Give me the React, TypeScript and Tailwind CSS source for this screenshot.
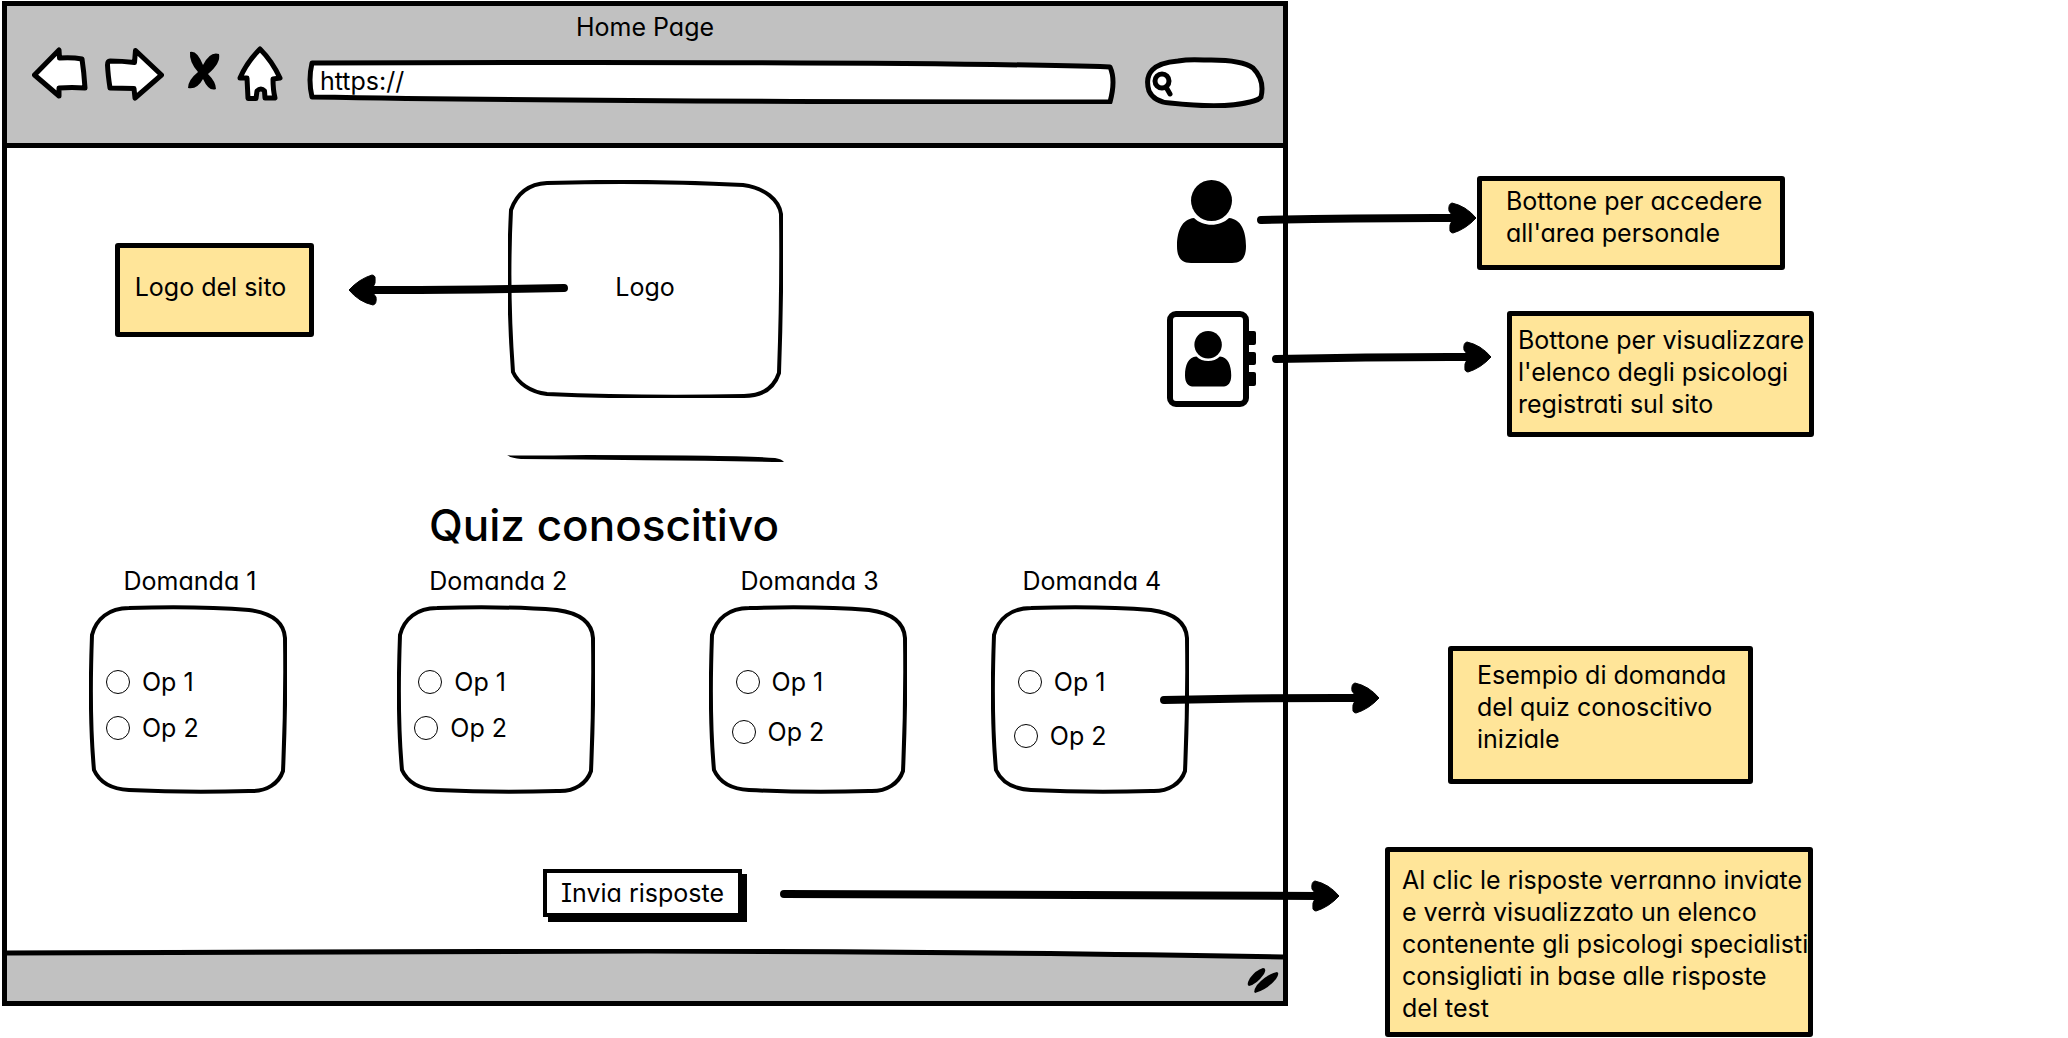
import React from 'react';

type ArrowProps = { length: number; rise?: number; className: string };

/* Hand-drawn pointer: a round-ended shaft with a barbed head on the right. */
function Arrow({ length, rise = 2, className }: ArrowProps) {
  const tipY = 16;
  const startY = tipY + rise;
  const neck = length - 25;
  return (
    <svg
      aria-hidden="true"
      width={length}
      height="32"
      viewBox={`0 0 ${length} 32`}
      className={`pointer-events-none absolute z-10 max-w-none ${className}`}
    >
      <path
        d={`M4 ${startY} Q${length / 2} ${tipY - 1 + rise / 3} ${neck + 6} ${tipY}`}
        fill="none"
        stroke="black"
        strokeWidth="8"
        strokeLinecap="round"
      />
      <path
        d={`M${length} ${tipY} Q${length - 10} 4 ${length - 24} 1 Q${length - 28} 2 ${length - 27} 9 L${neck + 1} 13 L${neck + 1} 19 Q${length - 27} 22 ${length - 26} 29 Q${length - 25} 31 ${length - 23} 31 Q${length - 10} 27 ${length} ${tipY} Z`}
        fill="black"
        stroke="black"
        strokeLinejoin="round"
      />
    </svg>
  );
}

function Person({ className }: { className: string }) {
  return (
    <svg aria-hidden="true" viewBox="0 0 69 83" className={className}>
      <circle cx="34.5" cy="20.5" r="20.5" />
      <path d="M14 83 C4 83 0 77 0 66 C0 51 5 39 17 38 C26 47 43 47 52 38 C64 39 69 51 69 66 C69 77 65 83 55 83 Z" />
    </svg>
  );
}

function AddressBook() {
  return (
    <svg aria-hidden="true" width="89" height="96" viewBox="0 0 89 96">
      <rect x="3" y="3" width="76" height="90" rx="6" fill="white" stroke="black" strokeWidth="6" />
      <rect x="80" y="20" width="9" height="14" rx="2" />
      <rect x="80" y="41" width="9" height="13" rx="2" />
      <rect x="80" y="61" width="9" height="14" rx="2" />
      <g transform="translate(18 20) scale(.67)">
        <circle cx="34.5" cy="20.5" r="20.5" />
        <path d="M14 83 C4 83 0 77 0 66 C0 51 5 39 17 38 C26 47 43 47 52 38 C64 39 69 51 69 66 C69 77 65 83 55 83 Z" />
      </g>
    </svg>
  );
}

/* Uneven pen outline behind a box; it stretches with the box it decorates. */
function Outline({ viewBox, d }: { viewBox: string; d: string }) {
  return (
    <svg
      aria-hidden="true"
      viewBox={viewBox}
      preserveAspectRatio="none"
      className="pointer-events-none absolute inset-0 size-full fill-none stroke-black stroke-[4px]"
    >
      <path d={d} />
    </svg>
  );
}

function Note({ className, children }: { className: string; children: React.ReactNode }) {
  return (
    <div className={`rounded-[3px] border-[5px] border-black bg-[#ffe599] ${className}`}>
      {children}
    </div>
  );
}

const toolIcon = 'fill-white stroke-black stroke-[5px] [stroke-linejoin:round]';

function BrowserBar() {
  return (
    <header className="border-b-[5px] border-black bg-[#c1c1c1] pt-[5px] pb-[35px]">
      <div className="text-center">Home Page</div>
      <div className="mt-[3px] flex items-start pr-[18px] pl-[25px]">
        <button aria-label="Indietro">
          <svg width="56" height="54" viewBox="32 46 56 54" className={toolIcon}>
            <path d="M34.5 75 L59 50 L59.5 58 Q72 57 82 59 Q84 72 85 88 Q72 87 59 88 L59 96 Z" />
          </svg>
        </button>
        <button aria-label="Avanti" className="ml-4">
          <svg width="60" height="56" viewBox="104 46 60 56" className={toolIcon}>
            <path d="M110 61 Q122 61 134.500 62.500 L135.500 50.500 L161.500 75 L135 98 L134 88.500 L110 88 Q108 75 107.500 65 Q107.500 61 110 61 Z" />
          </svg>
        </button>
        <button aria-label="Interrompi" className="ml-[23px]">
          <svg width="34" height="54" viewBox="187 46 34 54">
            <path d="M190 52 Q197 50 203 65 Q210 51 219 54 Q221 63 208 74 Q216 82 216 89 Q209 92 203 79 Q197 90 188 88 Q188 80 198 72 Q189 62 190 52 Z" />
          </svg>
        </button>
        <button aria-label="Pagina iniziale" className="ml-4">
          <svg width="46" height="55" viewBox="237 46 46 55" className={toolIcon}>
            <path d="M260 49 Q272 61 280 78 L273 79 Q273 90 275 98 L265 98 L264.500 91 Q261 87 257 91 L256 98.500 L248 98.500 L247 78 L240 78 Q247 62 260 49 Z" />
          </svg>
        </button>
        <div className="relative mt-[14px] ml-6 h-11 flex-1">
          <svg
            aria-hidden="true"
            viewBox="0 0 810 44"
            preserveAspectRatio="none"
            className="absolute inset-0 size-full fill-white stroke-black stroke-[5px] [stroke-linejoin:round]"
          >
            <path d="M5 3 Q620 1 804 7 Q810 20 804 42 Q300 42 5 37 Q1 20 5 3 Z" />
          </svg>
          <input
            aria-label="Indirizzo"
            defaultValue="https://"
            className="absolute top-[5px] left-[13px] h-8 w-11/12 bg-transparent outline-none"
          />
        </div>
        <div className="relative mt-[10px] ml-7 h-[52px] w-[121px]">
          <svg
            aria-hidden="true"
            width="121"
            height="52"
            viewBox="0 0 121 52"
            className="absolute inset-0 fill-white stroke-black stroke-[5px]"
          >
            <path d="M60 4 Q97 3 109 12 Q121 24 117 41 Q115 44 106 46 Q80 53 26 47 Q10 46 5 35 Q-3 8 34 5 Q45 3 60 4 Z" />
            <circle cx="18" cy="25" r="7" />
            <path d="M22 31 L26 38" strokeLinecap="round" />
          </svg>
          <input
            type="search"
            aria-label="Cerca"
            className="absolute top-3 left-8 h-7 w-20 bg-transparent outline-none"
          />
        </div>
      </div>
    </header>
  );
}

type Question = { id: number; first: string; second: string; gap: string; arrow?: boolean };

const questions: Question[] = [
  { id: 1, first: 'ml-[17px]', second: 'ml-[17px]', gap: 'mt-[14px]' },
  { id: 2, first: 'ml-[21px]', second: 'ml-[17px]', gap: 'mt-[14px]' },
  { id: 3, first: 'ml-[27px]', second: 'ml-[23px]', gap: 'mt-[18px]' },
  { id: 4, first: 'ml-[27px]', second: 'ml-[23px]', gap: 'mt-[22px]', arrow: true },
];

function Option({ name, label, className }: { name: string; label: string; className: string }) {
  return (
    <label className={`flex w-fit items-center gap-3 ${className}`}>
      <input
        type="radio"
        name={name}
        className="size-6 appearance-none rounded-full border border-black bg-white checked:bg-black"
      />
      {label}
    </label>
  );
}

function QuestionCard({ id, first, second, gap, arrow }: Question) {
  return (
    <fieldset className="w-[198px]">
      <legend className="w-full pl-1 text-center">Domanda {id}</legend>
      <div className="relative mt-2 h-[189px] pt-[61px]">
        <Outline
          viewBox="0 0 198 189"
          d="M40 3 Q110 1 160 5 C182 8 195 17 196 33 Q197 100 194 166 C190 178 178 187 160 186 Q100 188 40 185 C20 184 10 176 5 165 Q0 110 3 30 C7 14 20 3 40 3 Z"
        />
        <Option name={`domanda-${id}`} label="Op 1" className={first} />
        <Option name={`domanda-${id}`} label="Op 2" className={`${second} ${gap}`} />
        {arrow && <Arrow length={219} className="top-[77px] left-[169px]" />}
      </div>
    </fieldset>
  );
}

export default function App() {
  return (
    <div className="grid grid-cols-[1286fr_780fr] bg-white pt-px pl-[2px] font-['Inter',sans-serif] text-[25px] leading-8 text-black [font-feature-settings:'cv11']">
      <main className="self-start border-[5px] border-black">
        <BrowserBar />

        <section className="grid grid-cols-[1fr_275px_1fr] items-start pt-8">
          <div className="relative mt-[63px] ml-[108px] w-[199px]">
            <Note className="flex h-[94px] items-center justify-center pr-2 pb-1.5">Logo del sito</Note>
            <Arrow length={219} className="top-[31px] left-[234px] rotate-180" />
          </div>
          <div className="relative flex h-[218px] items-center justify-center pb-1">
            <Outline
              viewBox="0 0 275 218"
              d="M39 3 Q140 0 235 5 C257 8 271 20 273 34 Q274 110 271 193 C266 208 254 216 236 216 Q130 218 39 214 C22 212 10 203 5 192 Q-1 110 3 30 C9 13 20 4 39 3 Z"
            />
            Logo
          </div>
          <nav className="flex flex-col items-center justify-self-end pr-[27px]">
            <div className="relative">
              <button aria-label="Area personale" className="block">
                <Person className="h-[83px] w-[69px]" />
              </button>
              <Arrow length={219} className="top-[22px] left-[80px]" />
            </div>
            <div className="relative mt-12">
              <button aria-label="Elenco degli psicologi" className="block">
                <AddressBook />
              </button>
              <Arrow length={219} className="top-[30px] left-[105px]" />
            </div>
          </nav>
        </section>

        <svg aria-hidden="true" width="277" height="7" viewBox="0 0 277 7" className="mx-auto mt-12 block">
          <path d="M0 0 Q5 1 80 0 Q230 0 268 3 Q275 4 277 7 Q150 5 14 4 Q4 3 0 0 Z" />
        </svg>

        <h1 className="mt-[35px] mr-[82px] text-center text-[44px] leading-[56px] font-medium">
          Quiz conoscitivo
        </h1>

        <form>
          <div className="mt-3 grid grid-cols-[308fr_311fr_282fr_198fr] pr-[94px] pl-[82px]">
            {questions.map((q) => (
              <QuestionCard key={q.id} {...q} />
            ))}
          </div>
          <div className="relative mx-auto mt-[75px] mb-8 w-[204px]">
            <button
              type="submit"
              className="h-12 w-[199px] border-4 border-black bg-white shadow-[5px_5px_0_black] [font-feature-settings:'cv11','cv08']"
            >
              Invia risposte
            </button>
            <Arrow length={559} rise={-2} className="top-[11px] left-[237px]" />
          </div>
        </form>

        <footer className="relative flex h-[52px] items-center justify-end bg-[#c1c1c1] pt-2.5 pr-1">
          <svg
            aria-hidden="true"
            viewBox="0 0 1276 12"
            preserveAspectRatio="none"
            className="absolute inset-x-0 top-0 h-3 w-full"
          >
            <path d="M0 0 H1276 V8 Q1000 0 640 0 Q200 0 0 2 Z" fill="white" />
            <path d="M0 4 Q200 3 640 2 Q1000 3 1276 8" fill="none" stroke="black" strokeWidth="5" />
          </svg>
          <svg aria-hidden="true" width="32" height="26" viewBox="1247 970 32 26">
            <path d="M1263 971 Q1267 971 1264 977 Q1257 987 1249 989 Q1246 988 1250 981 Q1256 973 1263 971 Z" />
            <path d="M1277 975 Q1280 976 1276 982 Q1267 993 1255 996 Q1253 994 1257 988 Q1267 977 1277 975 Z" />
          </svg>
        </footer>
      </main>

      <aside className="pt-[175px] whitespace-nowrap">
        <Note className="ml-[189px] h-[94px] w-[308px] pt-1 pl-6">
          Bottone per accedere
          <br />
          all'area personale
        </Note>
        <Note className="mt-[41px] ml-[219px] h-[126px] w-[307px] pt-2 pl-1.5">
          Bottone per visualizzare
          <br />
          l'elenco degli psicologi
          <br />
          registrati sul sito
        </Note>
        <Note className="mt-[209px] ml-[160px] h-[138px] w-[305px] pt-2 pl-6">
          Esempio di domanda
          <br />
          del quiz conoscitivo
          <br />
          iniziale
        </Note>
        <Note className="mt-[63px] ml-[97px] h-[190px] w-[428px] pt-3 pl-3">
          Al clic le risposte verranno inviate
          <br />
          e verrà visualizzato un elenco
          <br />
          contenente gli psicologi specialisti
          <br />
          consigliati in base alle risposte
          <br />
          del test
        </Note>
      </aside>
    </div>
  );
}
